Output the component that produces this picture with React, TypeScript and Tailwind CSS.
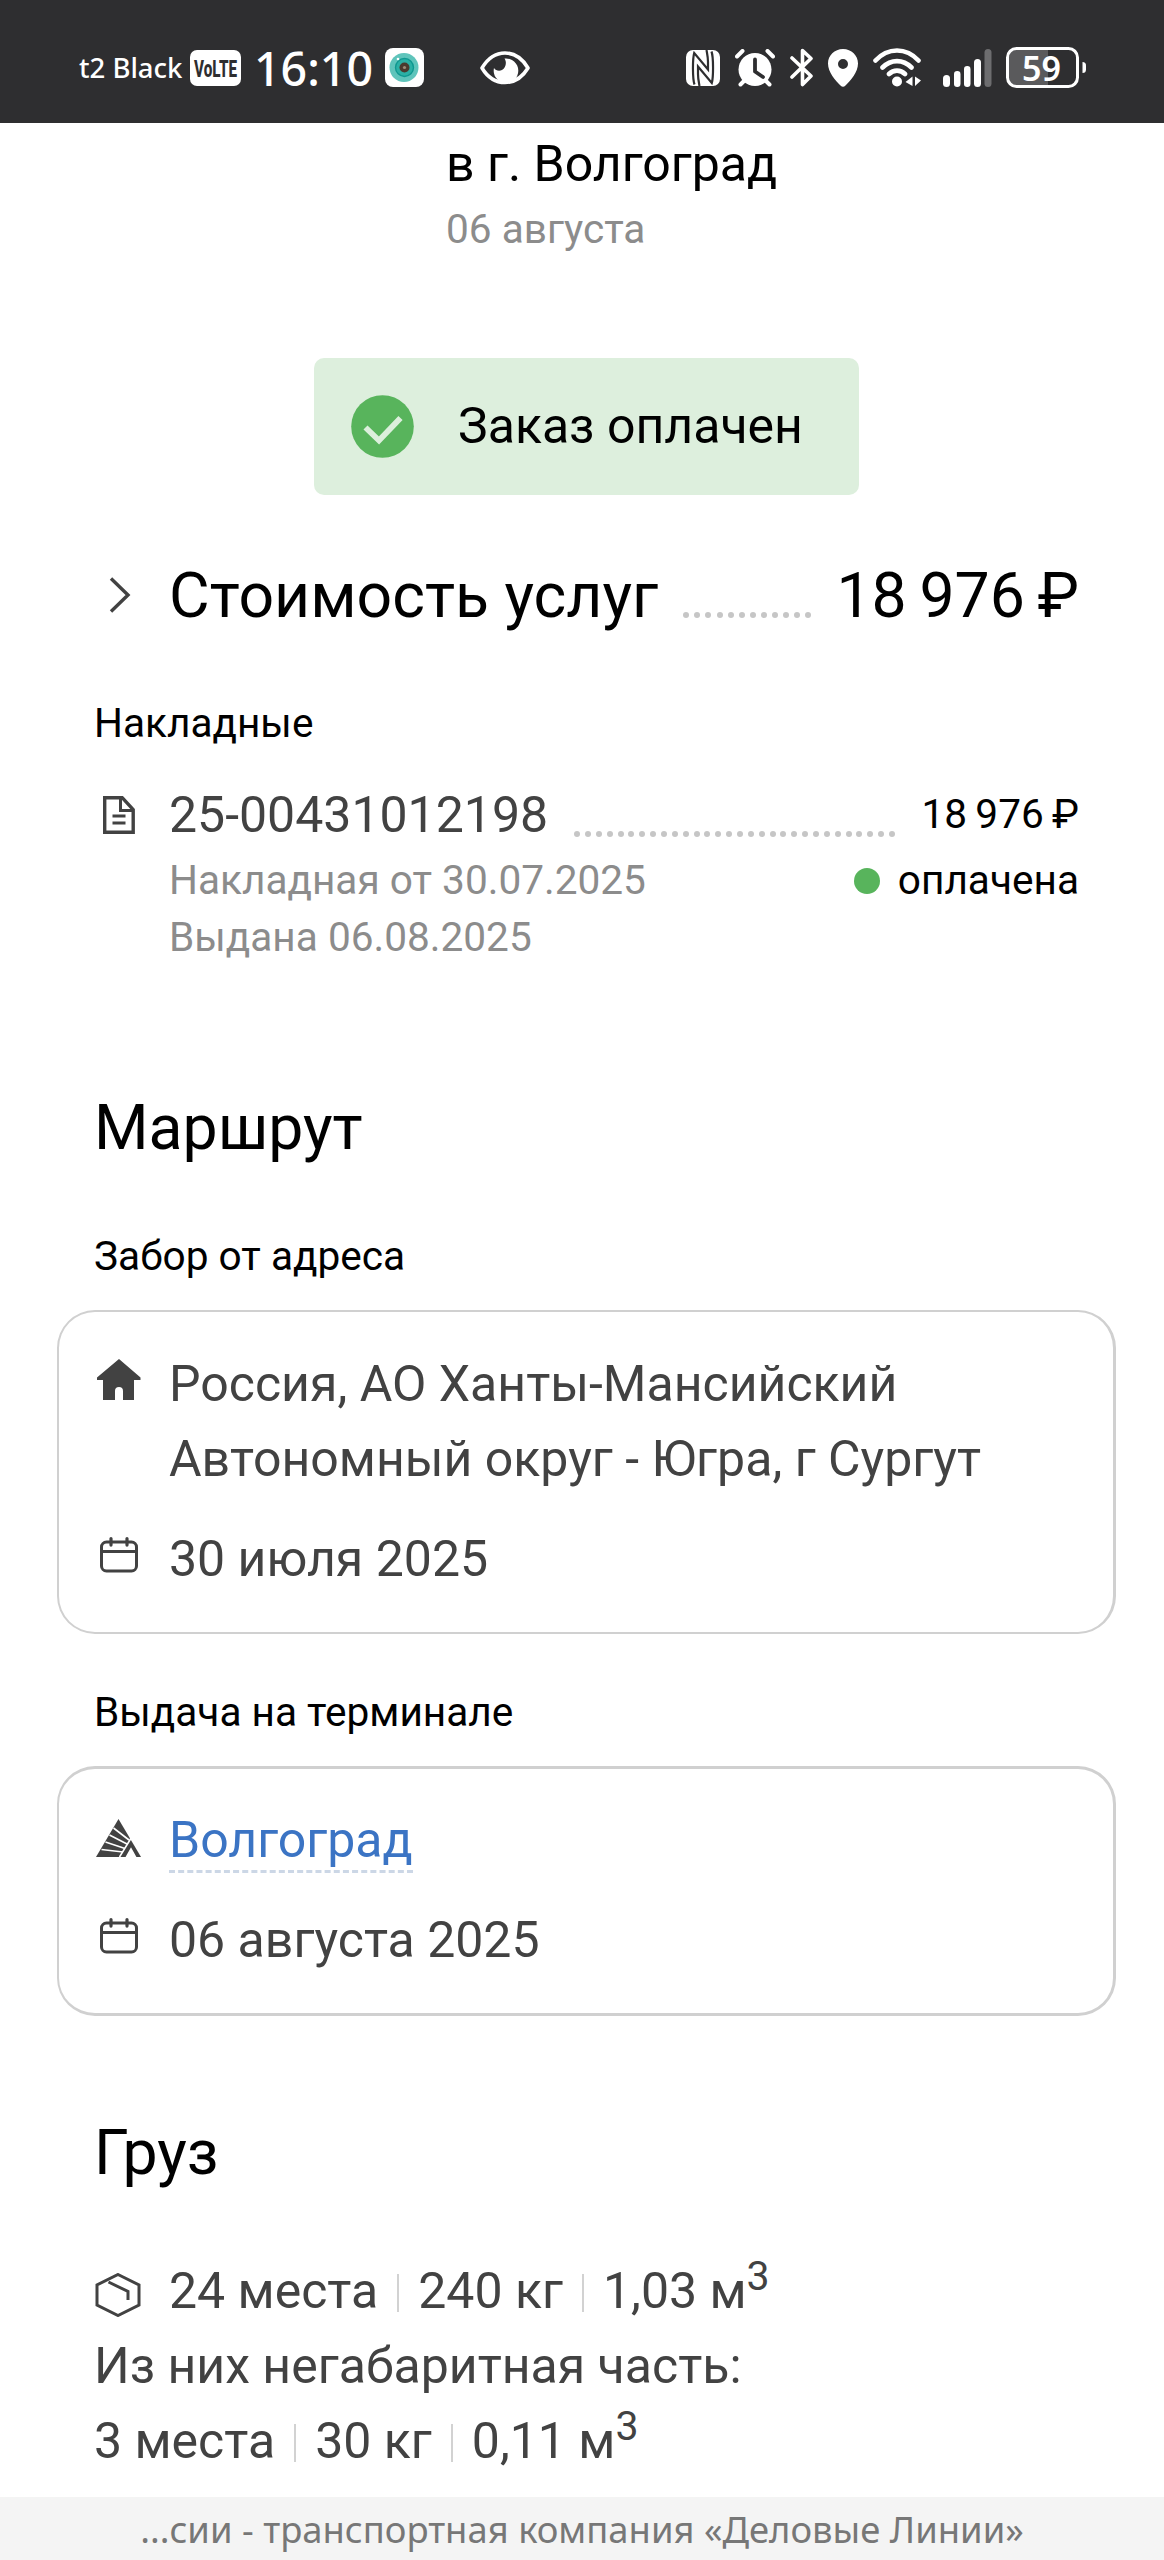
import React from 'react';

const VolteIcon = () => (
  <svg width="51" height="36" viewBox="0 0 51 36" className="ml-[5px] shrink-0 overflow-visible">
    <rect width="51" height="36" rx="7" fill="#fff" />
    <text x="4" y="26.500" textLength="43" lengthAdjust="spacingAndGlyphs" fontSize="24" fontWeight="800" fontFamily="Roboto, sans-serif" fill="#2e2e30">
      VoLTE
    </text>
  </svg>
);

const CameraAppIcon = () => (
  <svg width="39" height="39" viewBox="0 0 39 39" className="ml-[14px] shrink-0">
    <rect width="39" height="39" rx="8" fill="#fff" />
    <circle cx="19" cy="19.500" r="14.500" fill="#5fc4bb" />
    <circle cx="19.500" cy="19.500" r="9" fill="#2bb0a5" stroke="#0f9890" strokeWidth="1.400" />
    <circle cx="19.500" cy="19.500" r="5" fill="#4a3a2e" />
    <circle cx="19.500" cy="19.500" r="1.600" fill="#9b8b78" />
    <circle cx="13" cy="11" r="1.300" fill="#fff" />
  </svg>
);

const EyeIcon = () => (
  <svg width="50" height="34" viewBox="0 0 50 34" className="ml-[56px] shrink-0">
    <path d="M2 17C8 7 16 2 25 2s17 5 23 15C42 27 34 31.500 25 31.500S8 27 2 17Z" fill="none" stroke="#fff" strokeWidth="3.600" strokeLinejoin="round" />
    <path d="M24.500 7.500a12.300 12.300 0 1 1-10.500 9.500c1.500 2.500 5 3.500 8 2 4-2 5-8 2.500-11.500Z" fill="#fff" />
  </svg>
);

const NfcIcon = () => (
  <svg width="34" height="36" viewBox="0 0 34 36" className="shrink-0">
    <rect width="34" height="36" rx="7" fill="#fff" />
    <path d="M8.500 34.500C6.500 29 6.500 9 8.200 3L22 19.500V12C22 7 21 3 20.500 0M25.500 1.500C27.500 7 27.500 27 25.800 33L12 16.500V24c0 5 1 9 1.500 12" fill="none" stroke="#2e2e30" strokeWidth="2.200" />
  </svg>
);

const AlarmIcon = () => (
  <svg width="40" height="38" viewBox="0 0 40 38" className="ml-[15px] shrink-0">
    <circle cx="20" cy="20.500" r="16.500" fill="#fff" />
    <path d="M2 7.500 7.500 2M38 7.500 32.500 2M5.500 35.500l5-5M34.500 35.500l-5-5" stroke="#fff" strokeWidth="4" strokeLinecap="round" />
    <path d="M20 10.500v12l8 5.500" fill="none" stroke="#2e2e30" strokeWidth="3.800" strokeLinecap="round" strokeLinejoin="round" />
  </svg>
);

const BluetoothIcon = () => (
  <svg width="24" height="39" viewBox="0 0 24 39" className="ml-[15px] shrink-0">
    <path d="M2 10 21 28 12.500 36.500V2.500L21 10.500 2 29" fill="none" stroke="#fff" strokeWidth="3.600" strokeLinecap="round" strokeLinejoin="round" />
  </svg>
);

const PinIcon = () => (
  <svg width="30" height="38" viewBox="0 0 30 38" className="ml-[14px] shrink-0">
    <path fillRule="evenodd" fill="#fff" d="M15 0C23.500 0 30 6.500 30 14.500c0 9-7.500 17-12.500 22a3.500 3.500 0 0 1-5 0C7.500 31.500 0 23.500 0 14.500 0 6.500 6.500 0 15 0Zm0 10a5 5 0 1 0 0 10 5 5 0 0 0 0-10Z" />
  </svg>
);

const WifiIcon = () => (
  <svg width="48" height="39" viewBox="0 0 48 39" className="ml-[15px] shrink-0">
    <path d="M2.500 12.500C15-.8 33-.8 45.500 12.500M9.500 19.500c8.500-8.500 20.500-8.500 29 0M16 26c4.500-4.500 11.500-4.500 16 0" fill="none" stroke="#fff" strokeWidth="4.600" strokeLinecap="round" />
    <circle cx="24" cy="33.500" r="5" fill="#fff" />
    <path d="M39.500 28.500v9.500l-7-4ZM42 38v-9.500l6 4Z" fill="#fff" />
  </svg>
);

const SignalIcon = () => (
  <svg width="49" height="38" viewBox="0 0 49 38" className="ml-[22px] shrink-0">
    <rect x="0" y="26" width="7" height="12" rx="3.500" fill="#fff" />
    <rect x="11" y="22" width="6.500" height="16" rx="3.200" fill="#fff" />
    <rect x="21" y="17" width="6.500" height="21" rx="3.200" fill="#fff" />
    <rect x="31" y="10" width="7" height="28" rx="3.500" fill="#fff" />
    <rect x="41.500" y="0" width="7" height="38" rx="3.500" fill="#6d6d6f" />
  </svg>
);

const BatteryIcon = () => (
  <svg width="81" height="41" viewBox="0 0 81 41" className="ml-[14px] shrink-0 overflow-visible">
    <path d="M42 3v35H10a7 7 0 0 1-7-7V10a7 7 0 0 1 7-7Z" fill="#5a5a5c" />
    <rect x="1.500" y="1.500" width="70" height="38" rx="9" fill="none" stroke="#fff" strokeWidth="3" />
    <path d="M76.500 15a3.500 3.500 0 0 1 3.500 3.500v4a3.500 3.500 0 0 1-3.500 3.500Z" fill="#fff" />
    <text x="16" y="33.500" textLength="39" lengthAdjust="spacingAndGlyphs" fontSize="35" fontWeight="600" fontFamily="'Noto Sans', sans-serif" fill="#fff">
      59
    </text>
  </svg>
);

const StatusBar = () => (
  <header className="flex h-[123px] items-center bg-[#2e2e30] pl-[79px] pr-[77px] pt-[12px] font-['Noto_Sans',sans-serif] text-white">
    <div className="flex items-center">
      <span className="w-[106px] whitespace-nowrap text-[27.5px] font-medium leading-[40px]">t2 Black</span>
      <VolteIcon />
      <span className="ml-[13px] w-[117px] whitespace-nowrap text-[46.5px] font-medium leading-[48px]">16:10</span>
      <CameraAppIcon />
      <EyeIcon />
    </div>
    <div className="ml-auto flex items-center">
      <NfcIcon />
      <AlarmIcon />
      <BluetoothIcon />
      <PinIcon />
      <WifiIcon />
      <SignalIcon />
      <BatteryIcon />
    </div>
  </header>
);

const CheckIcon = () => (
  <svg width="63" height="63" viewBox="0 0 63 63" className="shrink-0">
    <circle cx="31.500" cy="31.500" r="31.300" fill="#58b45c" />
    <path d="M14.500 32.500 28 45.500 49.500 23" fill="none" stroke="#dcefdc" strokeWidth="5.800" />
  </svg>
);

const ChevronIcon = () => (
  <svg width="22" height="36" viewBox="0 0 22 36" className="ml-[15px] shrink-0">
    <path d="M2 1.500 19 18 2 34.500" fill="none" stroke="#424242" strokeWidth="3.400" />
  </svg>
);

const DocumentIcon = () => (
  <svg width="32" height="38" viewBox="0 0 32 38" className="ml-[9px] mt-[2px] shrink-0">
    <path d="M1.700 1.700h17.500l11 12v22.500H1.700Z" fill="none" stroke="#424242" strokeWidth="3.400" />
    <path d="M17.500 2v12.500h13M9.500 20h13M9.500 27h13" fill="none" stroke="#424242" strokeWidth="3" />
  </svg>
);

const HomeIcon = () => (
  <svg width="46" height="42" viewBox="0 0 46 42" className="-mt-[5px] ml-px shrink-0">
    <path d="M23 0 44.500 18.500V21H38v20H27V32a4 4 0 0 0-8 0v9H7V21H1v-2.500Z" fill="#424242" />
  </svg>
);

const CalendarIcon = () => (
  <svg width="38" height="36" viewBox="0 0 38 36" className="-mt-[5px] ml-[5px] shrink-0">
    <rect x="1.500" y="5" width="35" height="29" rx="5" fill="none" stroke="#424242" strokeWidth="3" />
    <path d="M1 14.500h36" stroke="#424242" strokeWidth="3" />
    <path d="M11 1.600v6.500M27 1.600v6.500" stroke="#424242" strokeWidth="3.200" strokeLinecap="round" />
  </svg>
);

const TerminalIcon = () => (
  <svg width="46" height="38" viewBox="0 0 46 38" className="-mt-[2px] ml-px shrink-0">
    <path d="M22.500 0 45 38H0Z" fill="#424242" />
    <path d="M17.500 9 33 21M13.500 16 31 25M9.500 23 29 29.500M5.500 30.500 27 33" stroke="#fff" strokeWidth="1.600" />
    <path d="M37 16 23.500 38M30.500 38l4.500-8 4.500 8Z" stroke="#fff" strokeWidth="1.600" fill="#fff" />
  </svg>
);

const BoxIcon = () => (
  <svg width="46" height="44" viewBox="0 0 46 44" className="ml-px shrink-0">
    <path d="M23 1.500 44 12v20L23 42.500 2 32V12Z" fill="none" stroke="#424242" strokeWidth="3" />
    <path d="M13.500 9 33 18.500V27" fill="none" stroke="#424242" strokeWidth="3" />
  </svg>
);

interface DotsProps {
  count: number;
  className: string;
}

const Dots = ({ count, className }: DotsProps) => (
  <div className={className}>
    {Array.from({ length: count }).map((_, i) => (
      <span key={i} className="size-[6px] rounded-full bg-[#c6c6c6]" />
    ))}
  </div>
);

const Separator = () => <span className="mx-[19px] mt-[2px] h-[38px] w-[2px] self-center bg-[#d2d2d2]" />;

interface CargoLineProps {
  places: string;
  weight: string;
  volume: string;
}

const CargoLine = ({ places, weight, volume }: CargoLineProps) => (
  <div className="flex h-[75px] whitespace-nowrap">
    <span>{places}</span>
    <Separator />
    <span>{weight}</span>
    <Separator />
    <span>{volume}</span>
    <span className="-mt-[15px] text-[41px]">3</span>
  </div>
);

interface PointRowProps {
  icon: React.ReactNode;
  children: React.ReactNode;
}

const PointRow = ({ icon, children }: PointRowProps) => (
  <div className="flex">
    <div className="flex h-[71px] w-[74px] shrink-0 items-center">{icon}</div>
    <div>{children}</div>
  </div>
);

const App = () => {
  return (
    <div className="flex h-[2560px] w-[1164px] flex-col overflow-hidden bg-white font-[Roboto,sans-serif] text-black">
      <StatusBar />

      <main className="flex-1">
        <div className="pl-[446px] pt-[11px]">
          <p className="text-[50px] leading-[60px]">в г. Волгоград</p>
          <p className="mt-[7px] text-[40.6px] leading-[56px] text-[#8c8c8c]">06 августа</p>
        </div>

        <div className="ml-[314px] mt-[101px] flex h-[137px] w-[545px] items-center rounded-[10px] bg-[#ddefdd] pl-[37px]">
          <CheckIcon />
          <span className="-mt-[2px] ml-[44px] text-[50px] leading-[60px]">Заказ оплачен</span>
        </div>

        <section className="pl-[94px] pr-[85px]">
          <div className="mt-[60px] flex h-[80px] items-center text-[62.5px] leading-[80px]">
            <ChevronIcon />
            <span className="ml-[38px] mt-[2px] whitespace-nowrap">Стоимость услуг</span>
            <Dots count={12} className="mx-[25px] mt-[40px] flex flex-1 justify-between" />
            <span className="mt-[2px] whitespace-nowrap">18&#8201;976&#8201;₽</span>
          </div>

          <h3 className="mt-[60px] text-[40.6px] leading-[56px]">Накладные</h3>

          <div className="mt-[31px] flex h-[64px] items-center">
            <DocumentIcon />
            <span className="ml-[34px] mt-[2px] whitespace-nowrap text-[50px] leading-[64px] text-[#424242]">25-00431012198</span>
            <Dots count={30} className="mx-[26px] mt-[40px] flex flex-1 justify-between" />
            <span className="whitespace-nowrap text-[40.6px] leading-[64px]">18&#8201;976&#8201;₽</span>
          </div>
          <div className="mt-[6px] flex justify-between pl-[75px] text-[40.6px] leading-[57px]">
            <div className="text-[#8c8c8c]">
              <p>Накладная от 30.07.2025</p>
              <p>Выдана 06.08.2025</p>
            </div>
            <div className="flex h-[57px] items-center">
              <span className="mr-[18px] size-[26px] rounded-full bg-[#58b45c]" />
              <span>оплачена</span>
            </div>
          </div>
        </section>

        <section>
          <h2 className="mt-[122px] pl-[94px] text-[62.5px] leading-[80px]">Маршрут</h2>

          <h3 className="mt-[60px] pl-[94px] text-[40.6px] leading-[56px]">Забор от адреса</h3>
          <div className="ml-[57px] mt-[26px] h-[324px] w-[1059px] rounded-[38px] border-2 border-r-[3px] border-[#d0d0d0] pl-[36px] pt-[35px] text-[50px] leading-[75px] text-[#424242]">
            <PointRow icon={<HomeIcon />}>
              <p>Россия, АО Ханты-Мансийский</p>
              <p>Автономный округ - Югра, г Сургут</p>
            </PointRow>
            <div className="mt-[25px]">
              <PointRow icon={<CalendarIcon />}>30 июля 2025</PointRow>
            </div>
          </div>

          <h3 className="mt-[50px] pl-[94px] text-[40.6px] leading-[56px]">Выдача на терминале</h3>
          <div className="ml-[57px] mt-[26px] h-[250px] w-[1059px] rounded-[38px] border-[3px] border-l-2 border-[#d0d0d0] pl-[36px] pt-[34px] text-[50px] leading-[75px] text-[#424242]">
            <PointRow icon={<TerminalIcon />}>
              <p className="h-[70px] border-b-[3px] border-dashed border-[#ccd7e6] text-[#3b74c4]">Волгоград</p>
            </PointRow>
            <div className="mt-[29px]">
              <PointRow icon={<CalendarIcon />}>06 августа 2025</PointRow>
            </div>
          </div>
        </section>

        <section className="pl-[94px]">
          <h2 className="mt-[97px] text-[62.5px] leading-[80px]">Груз</h2>
          <div className="mt-[61px] text-[50px] leading-[75px] text-[#424242]">
            <div className="flex items-center">
              <div className="mt-[6px] w-[75px]">
                <BoxIcon />
              </div>
              <CargoLine places="24 места" weight="240 кг" volume="1,03 м" />
            </div>
            <p>Из них негабаритная часть:</p>
            <CargoLine places="3 места" weight="30 кг" volume="0,11 м" />
          </div>
        </section>
      </main>

      <footer className="h-[63px] whitespace-nowrap bg-[#f4f4f4] text-center font-['Noto_Sans',sans-serif] text-[36.4px] leading-[64px] text-[#777777]">
        ...сии - транспортная компания «Деловые Линии»
      </footer>
    </div>
  );
};

export default App;
